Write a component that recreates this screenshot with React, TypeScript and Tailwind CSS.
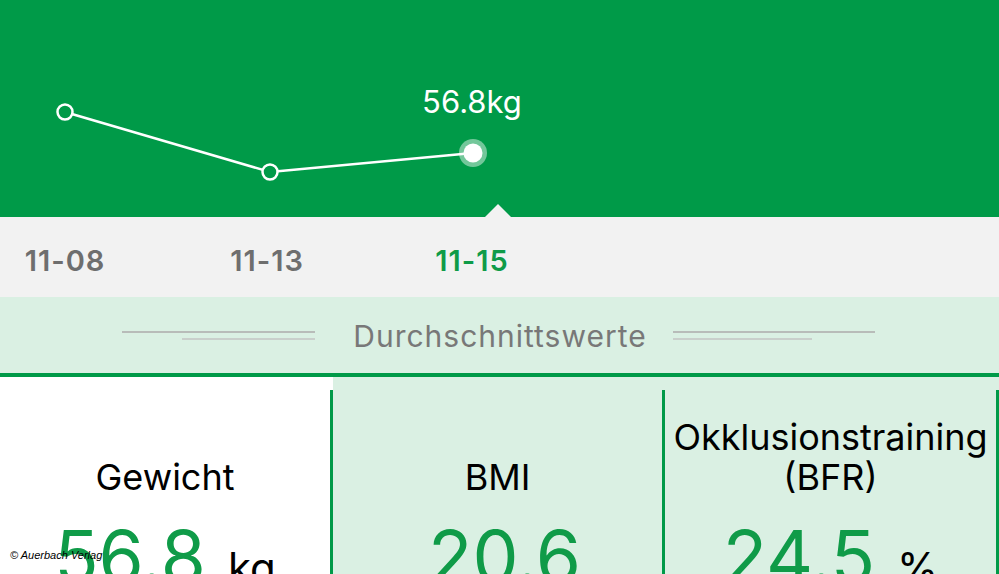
import React from "react";

const GREEN = "#009a48";

function Chart() {
  return (
    <svg width="999" height="217" viewBox="0 0 999 217" className="block">
      <polyline points="65,112 270,172 473,153" fill="none" stroke="#ffffff" strokeWidth="2.5" />
      <circle cx="65" cy="112" r="7.5" fill={GREEN} stroke="#ffffff" strokeWidth="2.5" />
      <circle cx="270" cy="172" r="7.5" fill={GREEN} stroke="#ffffff" strokeWidth="2.5" />
      <circle cx="473" cy="153" r="14" fill="#ffffff" fillOpacity="0.45" />
      <circle cx="473" cy="153" r="9.5" fill="#ffffff" />
    </svg>
  );
}

function Cell({
  title,
  value,
  unit,
  bg,
  lineClass,
  valueClass,
}: {
  title: React.ReactNode;
  value: string;
  unit?: string;
  bg: string;
  lineClass: string;
  valueClass: string;
}) {
  return (
    <div className={`flex flex-row overflow-hidden ${bg} ${lineClass}`}>
      <div className="flex flex-1 flex-col items-center">
        <div className="flex h-[120px] shrink-0 flex-col justify-end text-center text-[36px] leading-[40px] text-black">
          {title}
        </div>
        <div className={`mt-[23px] flex shrink-0 flex-row items-baseline leading-none ${valueClass}`}>
          <span className="text-[73px] text-[#0f9b48]">{value}</span>
          {unit ? <span className="ml-[22px] text-[42px] text-black">{unit}</span> : null}
        </div>
      </div>
      <div className="mt-[13px] w-[3px] shrink-0 bg-[#009a48]" />
    </div>
  );
}

export default function App() {
  return (
    <div
      className="relative h-[574px] w-[999px] overflow-hidden bg-white"
      style={{ fontFamily: "Inter, 'Liberation Sans', Arial, sans-serif" }}
    >
      {/* Header chart */}
      <div className="relative h-[217px] bg-[#009a48]">
        <Chart />
        <div className="absolute left-[472px] top-[86px] -translate-x-1/2 text-[31px] leading-none text-white">
          56.8kg
        </div>
        <div className="absolute bottom-0 left-[485px] h-0 w-0 border-b-[13px] border-l-[13px] border-r-[13px] border-b-[#f2f2f2] border-l-transparent border-r-transparent" />
      </div>

      {/* Dates */}
      <div className="flex h-[80px] flex-row bg-[#f2f2f2] pt-[29px] text-[29px] font-semibold leading-none tracking-[1px]">
        <div className="ml-[5px] w-[120px] text-center text-[#6e6e6e]">11-08</div>
        <div className="ml-[82px] w-[120px] text-center text-[#6e6e6e]">11-13</div>
        <div className="ml-[85px] w-[120px] text-center text-[#0f9b48]">11-15</div>
      </div>

      {/* Section title */}
      <div className="flex h-[76px] flex-row items-start bg-[#daf0e3]">
        <div className="ml-[122px] mt-[34px] flex w-[193px] flex-col items-end">
          <div className="h-[2px] w-[193px] bg-[#b8bcb9]" />
          <div className="mt-[5px] h-[1.5px] w-[133px] bg-[#c9cfcb]" />
        </div>
        <div className="ml-[38px] mt-[24px] w-[294px] text-center text-[30px] leading-none tracking-[1px] text-[#787878]">
          Durchschnittswerte
        </div>
        <div className="ml-[26px] mt-[34px] flex w-[202px] flex-col items-start">
          <div className="h-[2px] w-[202px] bg-[#b8bcb9]" />
          <div className="mt-[5px] h-[1.5px] w-[139px] bg-[#c9cfcb]" />
        </div>
      </div>

      <div className="h-[4px] bg-[#009a48]" />

      {/* Values */}
      <div className="flex h-[197px] flex-row">
        <Cell title="Gewicht" value="56.8" unit="kg" bg="bg-white" lineClass="w-[333px]" valueClass="" />
        <Cell title="BMI" value="20.6" bg="bg-[#daf0e3]" lineClass="w-[332px]" valueClass="pl-[14px]" />
        <Cell
          title={
            <>
              <span>Okklusionstraining</span>
              <span>(BFR)</span>
            </>
          }
          value="24.5"
          unit="%"
          bg="bg-[#daf0e3]"
          lineClass="w-[334px]"
          valueClass=""
        />
      </div>

      <div
        className="absolute left-[10px] top-[550px] text-[11px] italic leading-none text-black"
        style={{ fontFamily: "'Liberation Sans', Arial, sans-serif" }}
      >
        © Auerbach Verlag
      </div>
    </div>
  );
}
